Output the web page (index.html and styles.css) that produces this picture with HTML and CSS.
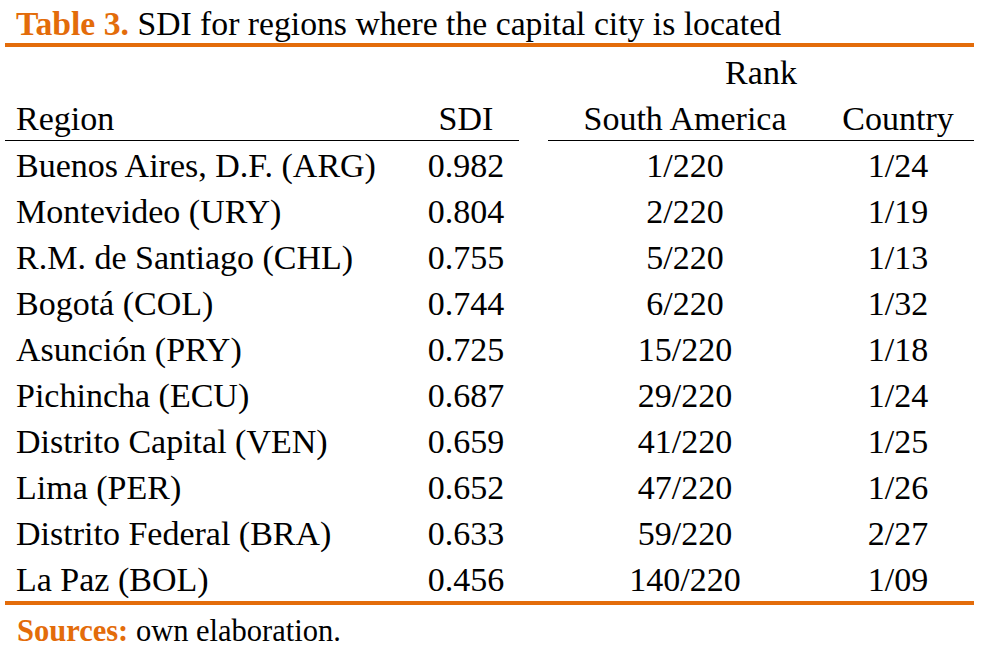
FILE: index.html
```html
<!DOCTYPE html>
<html lang="en">
<head>
<meta charset="utf-8">
<title>Table 3</title>
<link rel="stylesheet" href="styles.css">
</head>
<body>
<div class="page">
  <div class="title"><span class="label">Table 3.</span> SDI for regions where the capital city is located</div>
  <div class="tbl">
    <table>
      <colgroup>
        <col class="c-region">
        <col class="c-sdi">
        <col class="c-gap">
        <col class="c-sa">
        <col class="c-country">
      </colgroup>
      <thead>
        <tr class="h1">
          <th></th><th></th><th></th><th colspan="2" class="ctr">Rank</th>
        </tr>
        <tr class="h2">
          <th class="region rule">Region</th>
          <th class="ctr rule">SDI</th>
          <th></th>
          <th class="ctr rule">South America</th>
          <th class="ctr rule">Country</th>
        </tr>
      </thead>
      <tbody>
        <tr><td class="region">Buenos Aires, D.F. (ARG)</td><td class="ctr">0.982</td><td></td><td class="ctr">1/220</td><td class="ctr">1/24</td></tr>
        <tr><td class="region">Montevideo (URY)</td><td class="ctr">0.804</td><td></td><td class="ctr">2/220</td><td class="ctr">1/19</td></tr>
        <tr><td class="region">R.M. de Santiago (CHL)</td><td class="ctr">0.755</td><td></td><td class="ctr">5/220</td><td class="ctr">1/13</td></tr>
        <tr><td class="region">Bogotá (COL)</td><td class="ctr">0.744</td><td></td><td class="ctr">6/220</td><td class="ctr">1/32</td></tr>
        <tr><td class="region">Asunción (PRY)</td><td class="ctr">0.725</td><td></td><td class="ctr">15/220</td><td class="ctr">1/18</td></tr>
        <tr><td class="region">Pichincha (ECU)</td><td class="ctr">0.687</td><td></td><td class="ctr">29/220</td><td class="ctr">1/24</td></tr>
        <tr><td class="region">Distrito Capital (VEN)</td><td class="ctr">0.659</td><td></td><td class="ctr">41/220</td><td class="ctr">1/25</td></tr>
        <tr><td class="region">Lima (PER)</td><td class="ctr">0.652</td><td></td><td class="ctr">47/220</td><td class="ctr">1/26</td></tr>
        <tr><td class="region">Distrito Federal (BRA)</td><td class="ctr">0.633</td><td></td><td class="ctr">59/220</td><td class="ctr">2/27</td></tr>
        <tr><td class="region">La Paz (BOL)</td><td class="ctr">0.456</td><td></td><td class="ctr">140/220</td><td class="ctr">1/09</td></tr>
      </tbody>
    </table>
  </div>
  <div class="source"><span class="label">Sources:</span> own elaboration.</div>
</div>
</body>
</html>
```

FILE: styles.css
```css
html, body {
  margin: 0;
  padding: 0;
  background: #ffffff;
}

body {
  font-family: "Liberation Serif", "Times New Roman", serif;
  color: #000000;
}

.page {
  margin-left: 5px;
  width: 969px;
}

.label {
  color: #e36c0a;
  font-weight: bold;
}

.title {
  font-size: 33.7px;
  line-height: 39px;
  padding: 4px 0 0 11px;
  border-bottom: 4px solid #e36c0a;
  white-space: nowrap;
}

.tbl {
  border-bottom: 4px solid #e36c0a;
}

table {
  width: 969px;
  table-layout: fixed;
  border-collapse: separate;
  border-spacing: 0;
  font-size: 34px;
}

.c-region { width: 408px; }
.c-sdi { width: 106px; }
.c-gap { width: 29px; }
.c-sa { width: 274px; }
.c-country { width: 152px; }

th, td {
  font-weight: normal;
  padding: 0;
  white-space: nowrap;
  vertical-align: top;
}

.region {
  text-align: left;
  padding-left: 11px;
}

.ctr {
  text-align: center;
}

.h1 th {
  padding-top: 5px;
  padding-bottom: 2px;
  line-height: 42px;
}

.h2 th {
  padding-top: 2px;
  line-height: 42px;
}

.h2 th.rule {
  border-bottom: 1px solid #000000;
}

tbody td {
  padding-top: 4px;
  line-height: 42px;
}

.source {
  font-size: 30.5px;
  line-height: 36px;
  padding: 8px 0 0 12px;
}
```
